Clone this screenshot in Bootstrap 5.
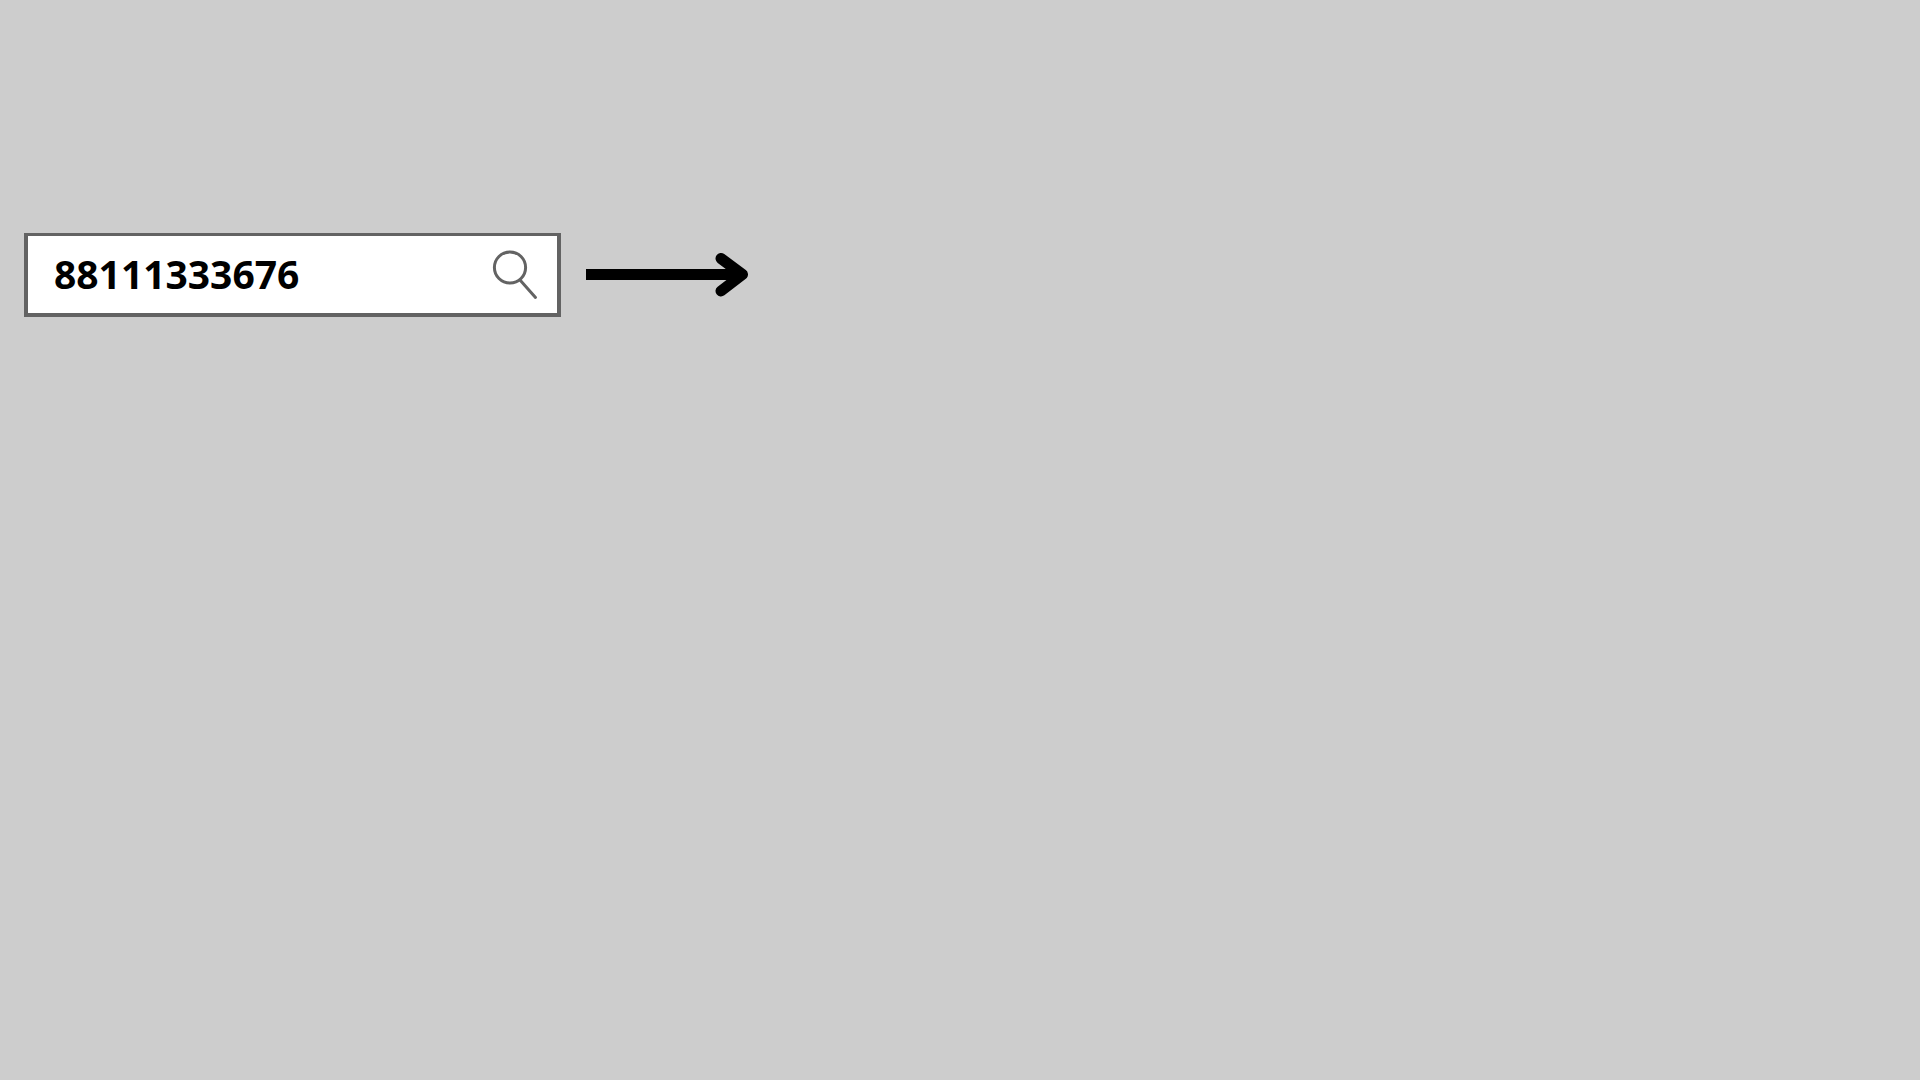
<!DOCTYPE html>
<html lang="en">
<head>
<meta charset="utf-8">
<meta name="viewport" content="width=device-width, initial-scale=1">
<title>Number search</title>
<link href="https://cdn.jsdelivr.net/npm/bootstrap@5.3.0/dist/css/bootstrap.min.css" rel="stylesheet">
<style>
  body { background: #cdcdcd; }
  .lookup { padding: 233px 24px 24px; }
  .search-box { width: 537px; max-width: 100%; height: 84px; border: 4px solid #636363; border-top-width: 3px; }
  .search-box .form-control {
    font-family: "Open Sans", "Noto Sans", sans-serif;
    font-size: 39px; font-weight: 700; line-height: 56px; color: #000;
    padding: 0 0 2px 26px;
  }
  .search-box .btn { width: 79px; }
</style>
</head>
<body>
<main class="lookup d-flex flex-wrap align-items-center gap-4">
  <form class="search-box input-group flex-nowrap bg-white" role="search">
    <input class="form-control border-0 rounded-0 bg-transparent shadow-none" id="number" type="text" inputmode="numeric" aria-label="Number" value="88111333676">
    <button class="btn border-0 rounded-0 p-0 d-flex align-items-center" type="button" aria-label="Search">
      <svg width="64" height="56" viewBox="0 0 64 56" fill="none" stroke="#636363" aria-hidden="true">
        <circle cx="32" cy="20.5" r="15.6" stroke-width="3"/>
        <path d="M42 33 57.5 50.5" stroke-width="3" stroke-linecap="round"/>
      </svg>
    </button>
  </form>
  <svg width="165" height="46" viewBox="0 0 165 46" fill="none" stroke="#000" stroke-width="11" aria-hidden="true">
    <path d="M1 22.5H150"/>
    <path d="M136 6.5 157.5 22.5 136 39" stroke-linecap="round" stroke-linejoin="round"/>
    <path d="M137 22.5 147 15V30Z" fill="#000" stroke="none"/>
  </svg>
</main>
<script src="https://cdn.jsdelivr.net/npm/bootstrap@5.3.0/dist/js/bootstrap.bundle.min.js"></script>
</body>
</html>
